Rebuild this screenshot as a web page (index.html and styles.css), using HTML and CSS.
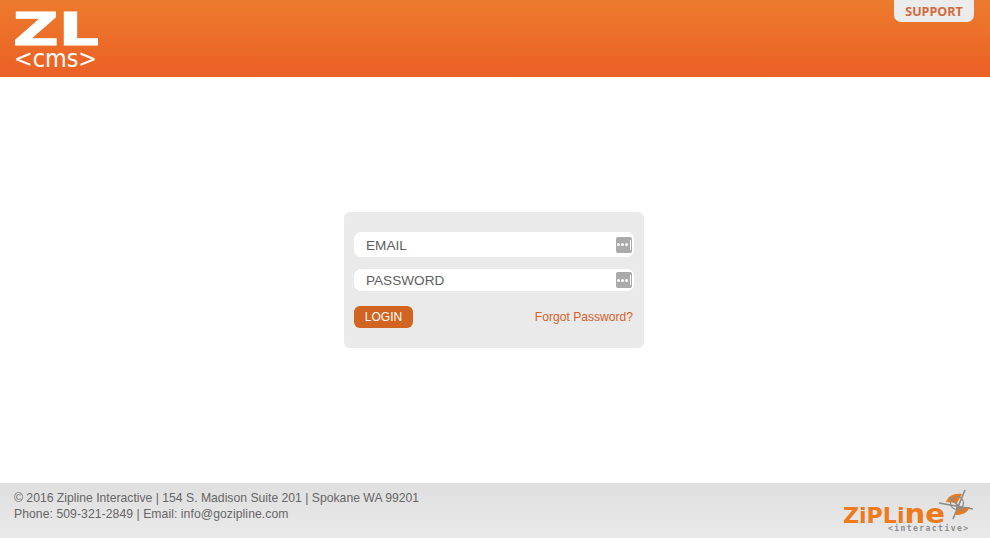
FILE: index.html
```html
<!DOCTYPE html>
<html lang="en">
<head>
    <meta charset="UTF-8">
    <meta name="viewport" content="width=device-width, initial-scale=1.0">
    <title>ZL CMS Login</title>
    <link rel="stylesheet" href="styles.css">
</head>
<body>
    <header class="topbar">
        <svg class="cms-logo" width="90" height="74" viewBox="0 0 90 74">
            <text class="cms-logo-zl" x="0" y="45" textLength="86" lengthAdjust="spacingAndGlyphs">ZL</text>
            <text class="cms-logo-sub" x="1" y="67" textLength="83" lengthAdjust="spacingAndGlyphs">&lt;cms&gt;</text>
        </svg>
        <a class="support-tab" href="#">SUPPORT</a>
    </header>

    <main class="content">
        <form class="login-box">
            <div class="field field-email">
                <input class="field-input" type="text" placeholder="EMAIL">
                <span class="pw-icon"><i></i><i></i><i></i><b></b></span>
            </div>
            <div class="field field-password">
                <input class="field-input" type="password" placeholder="PASSWORD">
                <span class="pw-icon"><i></i><i></i><i></i><b></b></span>
            </div>
            <div class="login-actions">
                <button class="login-btn" type="button">LOGIN</button>
                <a class="forgot-link" href="#">Forgot Password?</a>
            </div>
        </form>
    </main>

    <footer class="footer">
        <div class="footer-text">
            <div>&copy; 2016 Zipline Interactive | 154 S. Madison Suite 201 | Spokane WA 99201</div>
            <div class="footer-contact">Phone: 509-321-2849 | Email: info@gozipline.com</div>
        </div>
        <svg class="zipline-logo" width="130" height="46" viewBox="0 0 130 46">
            <!-- compass mark -->
            <path d="M103 14C105 8 111 5 119 6L114 15z" fill="#ee7a1c"/>
            <path d="M113 19L127 19C125 24 120 27 113 27z" fill="#ee7a1c"/>
            <path d="M122 2L110 31M96 15L130 21M106 9L122 24" stroke="#8b8b8b" stroke-width="1.6" fill="none"/>
            <circle cx="114" cy="15" r="6.5" fill="none" stroke="#8b8b8b" stroke-width="1.2"/>
            <text class="zipline-name" x="0" y="35" textLength="102" lengthAdjust="spacingAndGlyphs">ZiPLi<tspan class="zipline-tall">ne</tspan></text>
            <text class="zipline-sub" x="45" y="43" textLength="80" lengthAdjust="spacing">&lt;interactive&gt;</text>
        </svg>
    </footer>
</body>
</html>
```

FILE: styles.css
```css
*{
    padding:0;
    margin:0;
    box-sizing:border-box;
}
body{
    height:100vh;
    display:flex;
    flex-direction:column;
    background-color:#fff;
    font-family:"Liberation Sans",Arial,sans-serif;
    overflow:hidden;
}
.topbar{
    height:77px;
    flex-shrink:0;
    display:flex;
    justify-content:space-between;
    align-items:flex-start;
    padding:0 16px 0 13px;
    background:linear-gradient(to bottom,#ec7b2c,#ec6026);
}
.cms-logo{
    display:block;
}
.cms-logo-zl{
    font-family:"DejaVu Sans",sans-serif;
    font-weight:bold;
    font-size:44px;
    fill:#fff;
    stroke:#fff;
    stroke-width:1;
}
.cms-logo-sub{
    font-family:"DejaVu Sans",sans-serif;
    font-size:24px;
    fill:#fff;
}
.support-tab{
    width:80px;
    height:22px;
    display:flex;
    justify-content:center;
    align-items:center;
    background-color:#ececec;
    border-radius:0 0 7px 7px;
    color:#d4693c;
    font-family:"Open Sans",sans-serif;
    font-weight:bold;
    font-size:12.5px;
    text-decoration:none;
}
.content{
    flex-grow:1;
    display:flex;
    justify-content:center;
    align-items:center;
    padding-right:2px;
}
.login-box{
    width:300px;
    height:136px;
    padding:20px 10px 0;
    background-color:#eaeaea;
    border-radius:6px;
}
.field{
    display:flex;
    align-items:center;
    padding:0 2px 0 12px;
    background-color:#fff;
    border-radius:7px;
}
.field-email{
    height:25px;
    margin-bottom:12px;
}
.field-password{
    height:22px;
    margin-bottom:15px;
}
.field-input{
    flex-grow:1;
    min-width:0;
    border:none;
    outline:none;
    background:transparent;
    font-family:"Liberation Sans",Arial,sans-serif;
    font-size:13.6px;
}
.field-email .field-input{
    padding-top:1px;
}
.field-input::placeholder{
    color:#5f5f5f;
    opacity:1;
}
.pw-icon{
    width:16px;
    height:16px;
    flex-shrink:0;
    display:flex;
    align-items:center;
    justify-content:center;
    gap:1px;
    background-color:#aaa;
    border-radius:2px;
}
.pw-icon i{
    width:3px;
    height:3px;
    background-color:#fff;
    border-radius:50%;
}
.pw-icon b{
    width:1px;
    height:10px;
    margin-left:1px;
    background-color:#fff;
}
.login-actions{
    display:flex;
    justify-content:space-between;
    align-items:center;
    padding-right:1px;
}
.login-btn{
    width:59px;
    height:22px;
    border:none;
    border-radius:6px;
    background-color:#d16420;
    color:#fff;
    font-family:"Liberation Sans",Arial,sans-serif;
    font-size:12px;
}
.forgot-link{
    color:#d9602a;
    font-size:12.1px;
    text-decoration:none;
}
.footer{
    height:55px;
    flex-shrink:0;
    display:flex;
    justify-content:space-between;
    align-items:flex-start;
    padding:0 0 0 14px;
    background:linear-gradient(to bottom,#dfdfdf,#e9e9e9);
}
.footer-text{
    padding-top:7px;
    color:#666;
    font-size:12.2px;
    line-height:16px;
}
.footer-contact{
    letter-spacing:.06px;
}
.zipline-logo{
    display:block;
    margin-top:5px;
    margin-right:17px;
}
.zipline-name{
    font-family:"DejaVu Sans",sans-serif;
    font-weight:bold;
    font-size:20.5px;
    fill:#ee7a1c;
}
.zipline-tall{
    font-size:27px;
}
.zipline-sub{
    font-family:"DejaVu Sans Mono",monospace;
    font-weight:bold;
    font-size:8px;
    fill:#8d8d8d;
}
```
